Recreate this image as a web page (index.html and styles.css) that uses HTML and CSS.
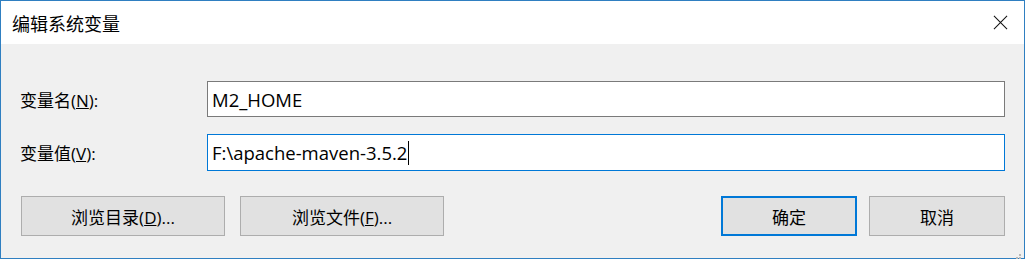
FILE: index.html
```html
<!DOCTYPE html>
<html lang="zh-CN">
<head>
    <meta charset="UTF-8">
    <title>编辑系统变量</title>
    <link rel="stylesheet" href="styles.css">
</head>
<body>
    <div class="window">
        <div class="titlebar">
            <span class="title">编辑系统变量</span>
            <span class="close">
                <svg width="16" height="16" viewBox="0 0 16 16">
                    <path d="M1 1 L15 15 M15 1 L1 15" stroke="#111" stroke-width="1.1" fill="none"/>
                </svg>
            </span>
        </div>
        <div class="content">
            <div class="field">
                <label class="field-label">变量名(<u>N</u>):</label>
                <div class="text-input">M2_HOME</div>
            </div>
            <div class="field">
                <label class="field-label">变量值(<u>V</u>):</label>
                <div class="text-input focused">F:\apache-maven-3.5.2<span class="caret"></span></div>
            </div>
            <div class="buttons">
                <button class="btn btn-wide">浏览目录(<u>D</u>)...</button>
                <button class="btn btn-wide">浏览文件(<u>F</u>)...</button>
                <span class="spacer"></span>
                <button class="btn btn-default">确定</button>
                <button class="btn">取消</button>
            </div>
            <div class="grip">
                <svg width="10" height="10" viewBox="0 0 10 10">
                    <rect x="7" y="1" width="2" height="2" fill="#b8b8b8"/>
                    <rect x="4" y="4" width="2" height="2" fill="#b8b8b8"/>
                    <rect x="7" y="4" width="2" height="2" fill="#b8b8b8"/>
                    <rect x="1" y="7" width="2" height="2" fill="#b8b8b8"/>
                    <rect x="4" y="7" width="2" height="2" fill="#b8b8b8"/>
                    <rect x="7" y="7" width="2" height="2" fill="#b8b8b8"/>
                </svg>
            </div>
        </div>
    </div>
</body>
</html>
```

FILE: styles.css
```css
* {
    margin: 0;
    padding: 0;
    box-sizing: border-box;
}

body {
    font-family: "Open Sans", "Noto Sans", "Noto Sans CJK SC", sans-serif;
    color: #000;
    background: #f0f0f0;
}

.window {
    width: 1025px;
    height: 259px;
    border: 1px solid #2f7fc1;
    display: flex;
    flex-direction: column;
    background: #f0f0f0;
}

.titlebar {
    height: 43px;
    background: #fff;
    display: flex;
    align-items: center;
    padding-left: 11px;
}

.title {
    font-size: 18px;
    flex: 1;
}

.close {
    width: 48px;
    height: 43px;
    display: flex;
    align-items: center;
    justify-content: center;
}

.close svg {
    width: 15px;
    height: 15px;
}

.content {
    position: relative;
    flex: 1;
    display: flex;
    flex-direction: column;
    gap: 17px;
    padding: 37px 19px 0 19px;
}

.field {
    display: flex;
    align-items: center;
}

.field-label {
    width: 187px;
    font-size: 17px;
}

.text-input {
    flex: 1;
    height: 36px;
    border: 1px solid #7a7a7a;
    background: #fff;
    font-size: 18.5px;
    padding-left: 4px;
    display: flex;
    align-items: center;
}

.text-input.focused {
    height: 37px;
    border-color: #0078d7;
}

.caret {
    display: inline-block;
    width: 1px;
    height: 24px;
    background: #000;
    margin-left: 1px;
}

.buttons {
    display: flex;
    margin-top: 8px;
    padding-left: 1px;
}

.btn {
    height: 40px;
    width: 136px;
    background: #e1e1e1;
    border: 1px solid #adadad;
    font-family: inherit;
    font-size: 17px;
    color: #000;
}

.btn-wide {
    width: 204px;
    margin-right: 15px;
}

.btn-default {
    border: 2px solid #0078d7;
    margin-right: 12px;
}

.spacer {
    flex: 1;
}

.grip {
    position: absolute;
    right: 2px;
    bottom: 2px;
    width: 10px;
    height: 10px;
}
```
